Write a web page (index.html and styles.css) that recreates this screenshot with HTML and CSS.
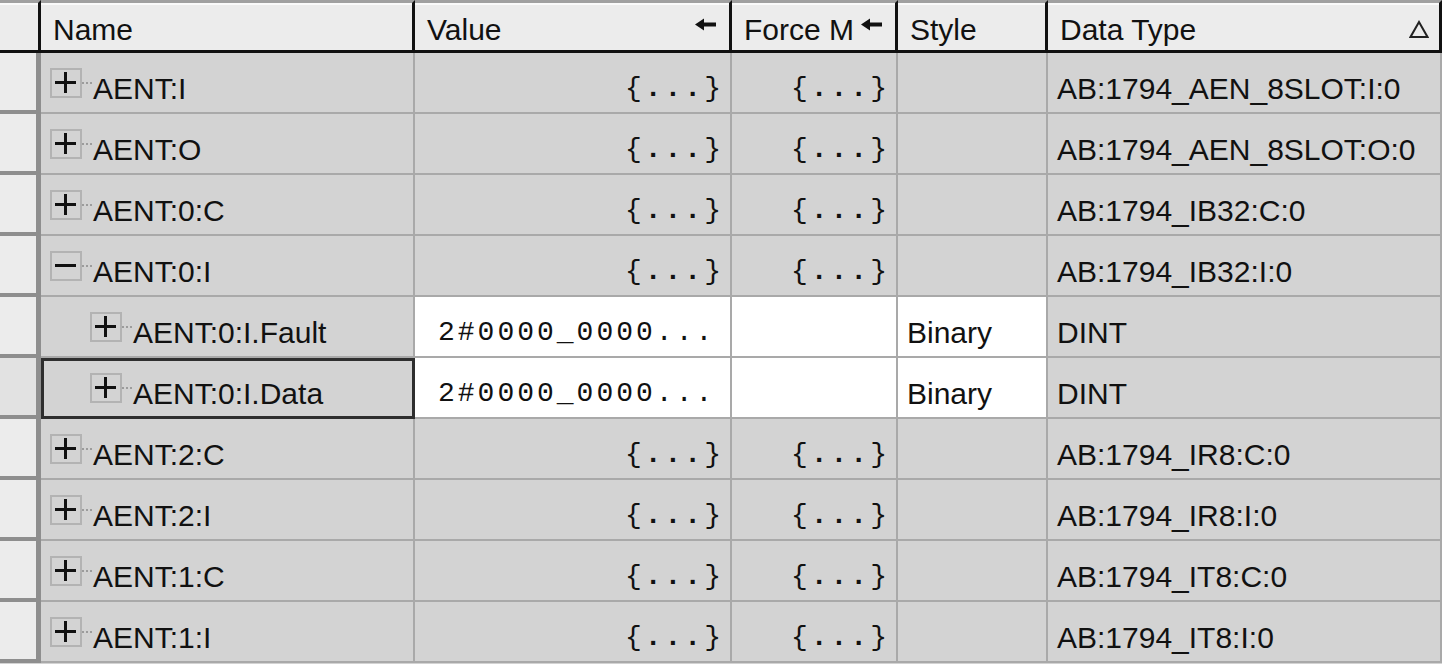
FILE: index.html
```html
<!DOCTYPE html>
<html lang="en">
<head>
  <meta charset="UTF-8" />
  <title>Controller Tags</title>
  <link rel="stylesheet" href="styles.css">
</head>
<body>

  <div class="tags">

    <!-- Column headers -->
    <div class="row head">
      <div class="corner"></div>
      <div class="th">Name</div>
      <div class="th">Value
        <svg class="arrow" width="22" height="13" viewBox="0 0 22 13"><path d="M0 6.5 L9 0.5 V4.5 H21 V8.5 H9 V12.5 Z" fill="#111"/></svg>
      </div>
      <div class="th">Force M
        <svg class="arrow" width="22" height="13" viewBox="0 0 22 13"><path d="M0 6.5 L9 0.5 V4.5 H21 V8.5 H9 V12.5 Z" fill="#111"/></svg>
      </div>
      <div class="th">Style</div>
      <div class="th">Data Type
        <svg class="sort" width="20" height="19" viewBox="0 0 20 19"><path d="M10 2 L18.5 17 H1.5 Z" fill="none" stroke="#222" stroke-width="2"/></svg>
      </div>
    </div>

    <div class="row">
      <div class="rh"></div>
      <div class="cell name"><svg class="exp"><use href="#plus"/></svg>AENT:I</div>
      <div class="cell mono right">{<b>...</b>}</div>
      <div class="cell mono right">{<b>...</b>}</div>
      <div class="cell"></div>
      <div class="cell">AB:1794_AEN_8SLOT:I:0</div>
    </div>

    <div class="row">
      <div class="rh"></div>
      <div class="cell name"><svg class="exp"><use href="#plus"/></svg>AENT:O</div>
      <div class="cell mono right">{<b>...</b>}</div>
      <div class="cell mono right">{<b>...</b>}</div>
      <div class="cell"></div>
      <div class="cell">AB:1794_AEN_8SLOT:O:0</div>
    </div>

    <div class="row">
      <div class="rh"></div>
      <div class="cell name"><svg class="exp"><use href="#plus"/></svg>AENT:0:C</div>
      <div class="cell mono right">{<b>...</b>}</div>
      <div class="cell mono right">{<b>...</b>}</div>
      <div class="cell"></div>
      <div class="cell">AB:1794_IB32:C:0</div>
    </div>

    <div class="row">
      <div class="rh"></div>
      <div class="cell name"><svg class="exp"><use href="#minus"/></svg>AENT:0:I</div>
      <div class="cell mono right">{<b>...</b>}</div>
      <div class="cell mono right">{<b>...</b>}</div>
      <div class="cell"></div>
      <div class="cell">AB:1794_IB32:I:0</div>
    </div>

    <div class="row">
      <div class="rh"></div>
      <div class="cell name child"><svg class="exp"><use href="#plus"/></svg>AENT:0:I.Fault</div>
      <div class="cell mono edit">2#0000_0000...</div>
      <div class="cell edit"></div>
      <div class="cell edit">Binary</div>
      <div class="cell">DINT</div>
    </div>

    <div class="row">
      <div class="rh current"></div>
      <div class="cell name child selected"><svg class="exp"><use href="#plus"/></svg>AENT:0:I.Data</div>
      <div class="cell mono edit">2#0000_0000...</div>
      <div class="cell edit"></div>
      <div class="cell edit">Binary</div>
      <div class="cell">DINT</div>
    </div>

    <div class="row">
      <div class="rh"></div>
      <div class="cell name"><svg class="exp"><use href="#plus"/></svg>AENT:2:C</div>
      <div class="cell mono right">{<b>...</b>}</div>
      <div class="cell mono right">{<b>...</b>}</div>
      <div class="cell"></div>
      <div class="cell">AB:1794_IR8:C:0</div>
    </div>

    <div class="row">
      <div class="rh"></div>
      <div class="cell name"><svg class="exp"><use href="#plus"/></svg>AENT:2:I</div>
      <div class="cell mono right">{<b>...</b>}</div>
      <div class="cell mono right">{<b>...</b>}</div>
      <div class="cell"></div>
      <div class="cell">AB:1794_IR8:I:0</div>
    </div>

    <div class="row">
      <div class="rh"></div>
      <div class="cell name"><svg class="exp"><use href="#plus"/></svg>AENT:1:C</div>
      <div class="cell mono right">{<b>...</b>}</div>
      <div class="cell mono right">{<b>...</b>}</div>
      <div class="cell"></div>
      <div class="cell">AB:1794_IT8:C:0</div>
    </div>

    <div class="row">
      <div class="rh"></div>
      <div class="cell name"><svg class="exp"><use href="#plus"/></svg>AENT:1:I</div>
      <div class="cell mono right">{<b>...</b>}</div>
      <div class="cell mono right">{<b>...</b>}</div>
      <div class="cell"></div>
      <div class="cell">AB:1794_IT8:I:0</div>
    </div>

  </div>

  <!-- expand / collapse boxes -->
  <svg width="0" height="0" class="defs">
    <symbol id="plus" viewBox="0 0 43 30">
      <rect x="1" y="1" width="30" height="28" fill="none" stroke="#b3b3b3" stroke-width="2"/>
      <path d="M5 14.5 H26 M15.5 4 V25" stroke="#111" stroke-width="3"/>
      <path d="M32 15 H43" stroke="#9c9c9c" stroke-width="2" stroke-dasharray="2 2"/>
    </symbol>
    <symbol id="minus" viewBox="0 0 43 30">
      <rect x="1" y="1" width="30" height="28" fill="none" stroke="#b3b3b3" stroke-width="2"/>
      <path d="M5 14.5 H26" stroke="#111" stroke-width="3"/>
      <path d="M32 15 H43" stroke="#9c9c9c" stroke-width="2" stroke-dasharray="2 2"/>
    </symbol>
  </svg>

</body>
</html>
```

FILE: styles.css
```css
* {
  box-sizing: border-box;
}
body {
  margin: 0;
  overflow: hidden;
  background: #d3d3d3;
  font-family: "Liberation Sans", Arial, sans-serif;
  font-size: 30px;
  color: #111;
}
.defs {
  position: absolute;
}
.tags {
  width: 1442px;
}
.row {
  display: grid;
  grid-template-columns: 41px 374px 317px 166px 150px 394px;
  height: 61px;
}
.row.head {
  height: 53px;
}

/* header */
.corner,
.th {
  background: #ececec;
  border-top: 3px solid #a0a0a0;
  border-bottom: 3px solid #111;
  border-right: 3px solid #111;
  box-shadow: inset 0 2px 0 #fafafa;
}
.th {
  display: flex;
  align-items: center;
  padding: 7px 12px 0 12px;
}
.arrow {
  margin-left: auto;
  margin-bottom: 12px;
}
.sort {
  margin-left: auto;
  margin-right: -2px;
  margin-bottom: 2px;
}

/* body */
.rh {
  background: #ececec;
  border-right: 5px solid #8e8e8e;
  border-bottom: 4px solid #8e8e8e;
}
.rh.current {
  background: #e2e2e2;
}
.cell {
  display: flex;
  align-items: center;
  padding: 12px 8px 0 9px;
  border-right: 2px solid #a9a9a9;
  border-bottom: 2px solid #a9a9a9;
  white-space: nowrap;
  overflow: hidden;
}
.cell.edit {
  background: #fff;
}
.cell.mono {
  font-family: "Liberation Mono", "Courier New", monospace;
  font-size: 28px;
  letter-spacing: 3px;
  padding-left: 23px;
}
.cell.mono b {
  font-weight: bold;
}
.cell.right {
  justify-content: flex-end;
  padding-right: 6px;
}
.cell.selected {
  outline: 3px solid #2e2e2e;
  outline-offset: -3px;
}
.exp {
  width: 43px;
  height: 30px;
  flex: none;
  margin-bottom: 12px;
}
.name {
  padding-left: 9px;
}
.name.child {
  padding-left: 49px;
}
```
